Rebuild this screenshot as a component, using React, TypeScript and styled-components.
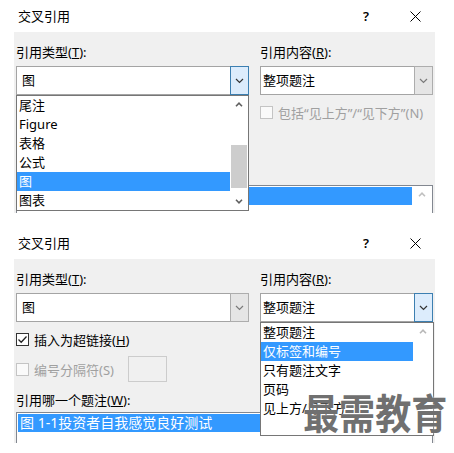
import React from "react";
import styled, { createGlobalStyle } from "styled-components";

const GlobalStyle = createGlobalStyle`
  html, body { margin: 0; padding: 0; background: #ffffff; }
  body {
    font-family: "Noto Sans", "Noto Sans CJK SC", sans-serif;
    font-size: 13px;
    color: #000000;
  }
  * { box-sizing: border-box; }
`;

const Page = styled.div`
  width: 454px;
  height: 453px;
  background: #ffffff;
  overflow: hidden;
  display: flex;
  flex-direction: column;
`;

const Dialog = styled.section<{ $gap: number }>`
  position: relative;
  margin-top: ${(p) => p.$gap}px;
`;

const TitleBar = styled.div`
  height: 32px;
  display: flex;
  align-items: center;
  padding-left: 18px;
`;

const Title = styled.span`
  font-size: 13px;
  line-height: 1;
`;

const Controls = styled.div`
  margin-left: auto;
  display: flex;
  align-items: center;
  gap: 41px;
  padding-right: 33px;
`;

const Help = styled.span`
  font-size: 13px;
  line-height: 1;
  font-weight: 600;
`;

const Body = styled.div<{ $height: number }>`
  margin-left: 14px;
  width: 421px;
  height: ${(p) => p.$height}px;
  background: #f0f0f0;
  padding: 11px 2px 0;
  overflow: hidden;
`;

const Columns = styled.div`
  display: grid;
  grid-template-columns: 233px 173px;
  column-gap: 11px;
  align-items: start;
`;

const Column = styled.div`
  display: flex;
  flex-direction: column;
`;

const FieldLabel = styled.div`
  height: 18px;
  line-height: 18px;
  margin-bottom: 5px;
  white-space: nowrap;
`;

const Key = styled.span`
  text-decoration: underline;
`;

const ComboWrap = styled.div`
  position: relative;
  height: 29px;
  display: flex;
`;

const ComboField = styled.div<{ $inset: number }>`
  flex: 1;
  background: #ffffff;
  border: 1px solid #a4a4a4;
  border-right: none;
  padding-left: ${(p) => p.$inset}px;
  line-height: 27px;
  white-space: nowrap;
`;

const ComboButton = styled.div<{ $hot: boolean }>`
  width: 19px;
  border: 1px solid ${(p) => (p.$hot ? "#3c7fb1" : "#adadad")};
  background: ${(p) => (p.$hot ? "#dcecfc" : "#e5e5e5")};
  display: flex;
  align-items: center;
  justify-content: center;
`;

const Dropdown = styled.div<{ $width: number; $height: number }>`
  position: absolute;
  top: 100%;
  left: 0;
  z-index: 5;
  width: ${(p) => p.$width}px;
  height: ${(p) => p.$height}px;
  background: #ffffff;
  border: 1px solid #767676;
  display: flex;
`;

const DropItems = styled.div`
  flex: 1;
  display: flex;
  flex-direction: column;
`;

const DropItem = styled.div<{ $selected: boolean }>`
  height: 19px;
  line-height: 19px;
  padding-left: 2px;
  white-space: nowrap;
  background: ${(p) => (p.$selected ? "#3399ff" : "transparent")};
  color: ${(p) => (p.$selected ? "#ffffff" : "#000000")};
`;

const ScrollBar = styled.div<{ $width: number }>`
  width: ${(p) => p.$width}px;
  display: flex;
  flex-direction: column;
  background: #ffffff;
`;

const ArrowCell = styled.div`
  height: 17px;
  display: flex;
  align-items: center;
  justify-content: center;
`;

const Track = styled.div`
  flex: 1;
  display: flex;
  flex-direction: column;
`;

const Thumb = styled.div<{ $offset: number; $size: number }>`
  margin: ${(p) => p.$offset}px 1px 0;
  height: ${(p) => p.$size}px;
  background: #cdcdcd;
`;

const CheckRow = styled.div<{ $disabled: boolean; $covered?: boolean }>`
  margin-top: 8px;
  height: 18px;
  display: flex;
  align-items: center;
  gap: 5px;
  white-space: nowrap;
  color: ${(p) => (p.$disabled ? "#a0a0a0" : "#000000")};
  visibility: ${(p) => (p.$covered ? "hidden" : "visible")};
`;

const SepRow = styled(CheckRow)`
  height: 26px;
`;

const Box = styled.span<{ $disabled: boolean }>`
  width: 13px;
  height: 13px;
  flex: none;
  border: 1px solid ${(p) => (p.$disabled ? "#c4c4c4" : "#333333")};
  background: ${(p) => (p.$disabled ? "#fafafa" : "#ffffff")};
  display: flex;
  align-items: center;
  justify-content: center;
`;

const SepInput = styled.div`
  margin-left: 9px;
  width: 39px;
  height: 26px;
  border: 1px solid #cccccc;
  background: #f0f0f0;
`;

const SubLabel = styled.div<{ $covered?: boolean }>`
  margin-top: 9px;
  height: 18px;
  line-height: 18px;
  white-space: nowrap;
  visibility: ${(p) => (p.$covered ? "hidden" : "visible")};
`;

const ListBox = styled.div`
  margin-top: 3px;
  height: 64px;
  border: 1px solid #828790;
  background: #ffffff;
  display: flex;
`;

const ListRows = styled.div`
  flex: 1;
  padding: 1px 0 0 1px;
`;

const ListRow = styled.div<{ $selected: boolean; $covered?: boolean }>`
  height: 18px;
  line-height: 18px;
  padding-left: 2px;
  font-size: 14px;
  white-space: nowrap;
  background: ${(p) => (p.$selected ? "#3399ff" : "transparent")};
  color: ${(p) => (p.$selected ? "#ffffff" : "#000000")};
  & > span {
    visibility: ${(p) => (p.$covered ? "hidden" : "visible")};
  }
`;

const Watermark = styled.div`
  position: absolute;
  left: 303px;
  top: 164px;
  z-index: 10;
  font-family: "Noto Sans CJK SC", sans-serif;
  font-weight: 700;
  font-size: 41px;
  line-height: 1;
  color: #707070;
  white-space: nowrap;
  transform: scaleX(0.88);
  transform-origin: left top;
  text-shadow: 0 0 2px rgba(255, 255, 255, 0.9);
`;

const Chevron = ({ up = false, color = "#606060" }: { up?: boolean; color?: string }) => (
  <svg width="9" height="6" viewBox="0 0 9 6">
    <polyline
      points={up ? "1,5 4.5,1.5 8,5" : "1,1 4.5,4.5 8,1"}
      fill="none"
      stroke={color}
      strokeWidth="1.2"
    />
  </svg>
);

const ScrollArrow = ({ up = false, color = "#606060" }: { up?: boolean; color?: string }) => (
  <svg width="8" height="5" viewBox="0 0 8 5">
    <polyline
      points={up ? "1,4.2 4,1.2 7,4.2" : "1,0.8 4,3.8 7,0.8"}
      fill="none"
      stroke={color}
      strokeWidth="1.6"
    />
  </svg>
);

const CloseIcon = () => (
  <svg width="11" height="11" viewBox="0 0 11 11">
    <line x1="0.5" y1="0.5" x2="10.5" y2="10.5" stroke="#000" strokeWidth="1" />
    <line x1="10.5" y1="0.5" x2="0.5" y2="10.5" stroke="#000" strokeWidth="1" />
  </svg>
);

const CheckMark = () => (
  <svg width="11" height="11" viewBox="0 0 11 11">
    <polyline points="1.5,5.5 4.2,8.2 9.5,2.5" fill="none" stroke="#222" strokeWidth="1.3" />
  </svg>
);

const typeItems = ["尾注", "Figure", "表格", "公式", "图", "图表"];
const contentItems = ["整项题注", "仅标签和编号", "只有题注文字", "页码", "见上方/见下方"];

type Variant = "type" | "content";

function CrossRefDialog({ variant, gap, height }: { variant: Variant; gap: number; height: number }) {
  const typeOpen = variant === "type";
  const contentOpen = variant === "content";
  return (
    <Dialog $gap={gap}>
      <TitleBar>
        <Title>交叉引用</Title>
        <Controls>
          <Help>?</Help>
          <CloseIcon />
        </Controls>
      </TitleBar>
      <Body $height={height}>
        <Columns>
          <Column>
            <FieldLabel>
              引用类型(<Key>T</Key>):
            </FieldLabel>
            <ComboWrap>
              <ComboField $inset={5}>图</ComboField>
              <ComboButton $hot={typeOpen}>
                <Chevron color={typeOpen ? "#333333" : "#7a7a7a"} />
              </ComboButton>
              {typeOpen && (
                <Dropdown $width={233} $height={116}>
                  <DropItems>
                    {typeItems.map((t, i) => (
                      <DropItem key={t} $selected={i === 4}>
                        {t}
                      </DropItem>
                    ))}
                  </DropItems>
                  <ScrollBar $width={18}>
                    <ArrowCell>
                      <ScrollArrow up />
                    </ArrowCell>
                    <Track>
                      <Thumb $offset={32} $size={43} />
                    </Track>
                    <ArrowCell>
                      <ScrollArrow />
                    </ArrowCell>
                  </ScrollBar>
                </Dropdown>
              )}
            </ComboWrap>
            <CheckRow $disabled={false} $covered={typeOpen}>
              <Box $disabled={false}>
                <CheckMark />
              </Box>
              <span>
                插入为超链接(<Key>H</Key>)
              </span>
            </CheckRow>
            <SepRow $disabled $covered={typeOpen}>
              <Box $disabled />
              <span>编号分隔符(S)</span>
              <SepInput />
            </SepRow>
            <SubLabel $covered={typeOpen}>
              引用哪一个题注(<Key>W</Key>):
            </SubLabel>
          </Column>
          <Column>
            <FieldLabel>
              引用内容(<Key>R</Key>):
            </FieldLabel>
            <ComboWrap>
              <ComboField $inset={2}>整项题注</ComboField>
              <ComboButton $hot={contentOpen}>
                <Chevron color={contentOpen ? "#333333" : "#7a7a7a"} />
              </ComboButton>
              {contentOpen && (
                <Dropdown $width={174} $height={114}>
                  <DropItems>
                    {contentItems.map((t, i) => (
                      <DropItem key={t} $selected={i === 1}>
                        {t}
                      </DropItem>
                    ))}
                  </DropItems>
                  <ScrollBar $width={20}>
                    <ArrowCell>
                      <ScrollArrow up color="#b8b8b8" />
                    </ArrowCell>
                  </ScrollBar>
                </Dropdown>
              )}
            </ComboWrap>
            <CheckRow $disabled $covered={contentOpen}>
              <Box $disabled />
              <span>包括“见上方”/“见下方”(N)</span>
            </CheckRow>
          </Column>
        </Columns>
        <ListBox>
          <ListRows>
            <ListRow $selected $covered={typeOpen}>
              <span>图 1-1投资者自我感觉良好测试</span>
            </ListRow>
          </ListRows>
          <ScrollBar $width={20}>
            <ArrowCell>
              <ScrollArrow up color="#c0c0c0" />
            </ArrowCell>
          </ScrollBar>
        </ListBox>
      </Body>
      {contentOpen && <Watermark>最需教育</Watermark>}
    </Dialog>
  );
}

export default function App() {
  return (
    <Page>
      <GlobalStyle />
      <CrossRefDialog variant="type" gap={0} height={181} />
      <CrossRefDialog variant="content" gap={14} height={184} />
    </Page>
  );
}
